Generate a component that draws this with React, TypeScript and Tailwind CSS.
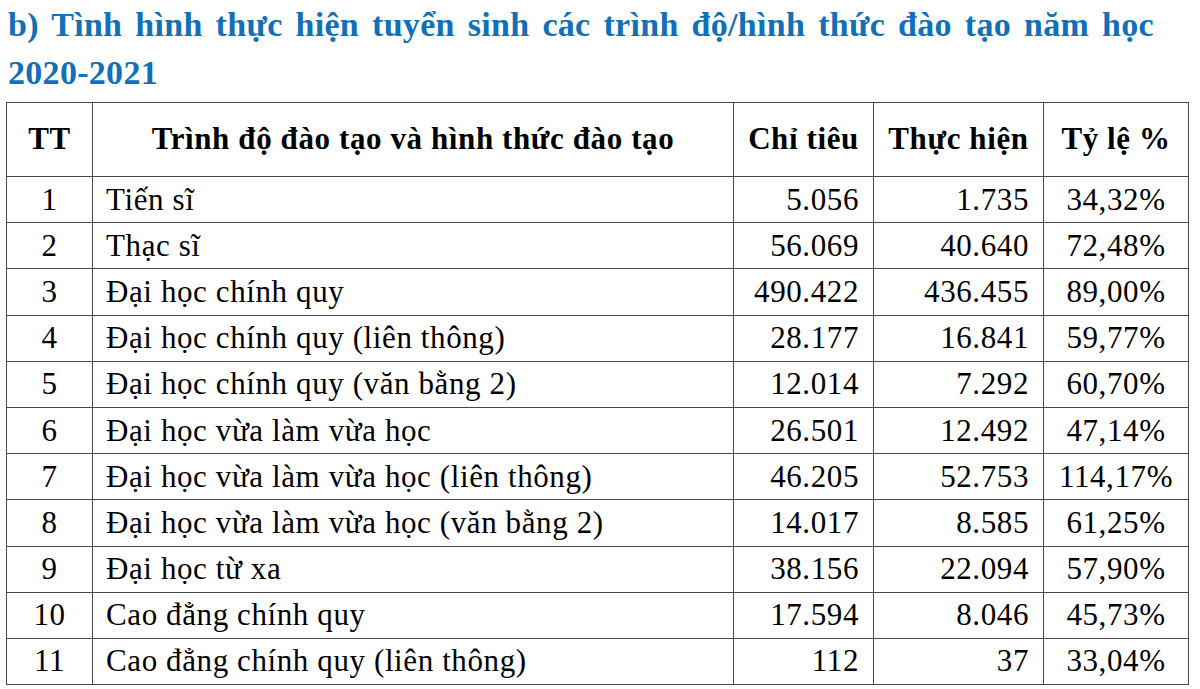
import React from "react";

const rows: [string, string, string, string, string][] = [
  ["1", "Tiến sĩ", "5.056", "1.735", "34,32%"],
  ["2", "Thạc sĩ", "56.069", "40.640", "72,48%"],
  ["3", "Đại học chính quy", "490.422", "436.455", "89,00%"],
  ["4", "Đại học chính quy (liên thông)", "28.177", "16.841", "59,77%"],
  ["5", "Đại học chính quy (văn bằng 2)", "12.014", "7.292", "60,70%"],
  ["6", "Đại học vừa làm vừa học", "26.501", "12.492", "47,14%"],
  ["7", "Đại học vừa làm vừa học (liên thông)", "46.205", "52.753", "114,17%"],
  ["8", "Đại học vừa làm vừa học (văn bằng 2)", "14.017", "8.585", "61,25%"],
  ["9", "Đại học từ xa", "38.156", "22.094", "57,90%"],
  ["10", "Cao đẳng chính quy", "17.594", "8.046", "45,73%"],
  ["11", "Cao đẳng chính quy (liên thông)", "112", "37", "33,04%"],
];

const cell = "border-[1.5px] border-[#4a4a4a] p-0";

export default function App() {
  return (
    <div
      className="w-[1200px] h-[689px] bg-white overflow-hidden text-black"
      style={{ fontFamily: '"Liberation Serif", "Times New Roman", serif' }}
    >
      <h1 className="pl-[8px] pt-[1px] mb-[5px] text-[34px] leading-[48px] font-bold text-[#1170b8] tracking-[0.3px]">
        <div className="w-[1146px] text-justify [text-align-last:justify]">
          b) Tình hình thực hiện tuyển sinh các trình độ/hình thức đào tạo năm học
        </div>
        <div>2020-2021</div>
      </h1>
      <table className="ml-[6px] w-[1182px] table-fixed border-collapse text-[31px] tracking-[0.6px]">
        <colgroup>
          <col className="w-[86px]" />
          <col className="w-[641px]" />
          <col className="w-[140px]" />
          <col className="w-[170px]" />
          <col className="w-[145px]" />
        </colgroup>
        <thead>
          <tr className="h-[74px] font-bold">
            <th className={`${cell} text-center`}>TT</th>
            <th className={`${cell} text-center`}>
              Trình độ đào tạo và hình thức đào tạo
            </th>
            <th className={`${cell} text-center whitespace-nowrap`}>Chỉ tiêu</th>
            <th className={`${cell} text-center whitespace-nowrap`}>Thực hiện</th>
            <th className={`${cell} text-center whitespace-nowrap`}>Tỷ lệ %</th>
          </tr>
        </thead>
        <tbody>
          {rows.map((r) => (
            <tr key={r[0]} className="h-[46.2px] leading-[32px]">
              <td className={`${cell} text-center`}>{r[0]}</td>
              <td className={`${cell} pl-[13px] whitespace-nowrap`}>{r[1]}</td>
              <td className={`${cell} text-right pr-[14px]`}>{r[2]}</td>
              <td className={`${cell} text-right pr-[14px]`}>{r[3]}</td>
              <td className={`${cell} text-center whitespace-nowrap`}>{r[4]}</td>
            </tr>
          ))}
        </tbody>
      </table>
    </div>
  );
}
